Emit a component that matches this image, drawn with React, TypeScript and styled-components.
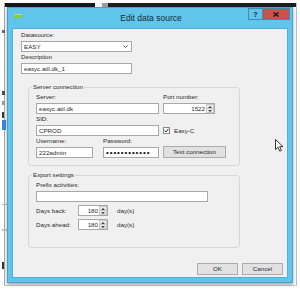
import styled, { createGlobalStyle } from 'styled-components';

const GlobalStyle = createGlobalStyle`
  * { box-sizing: border-box; }
  html, body { margin: 0; padding: 0; background: #ffffff; }
  body { font-family: 'Liberation Sans', Arial, sans-serif; color: #2a2a2a; }
`;

const Desktop = styled.div`
  position: relative;
  width: 300px;
  height: 292px;
  overflow: hidden;
  background: #ffffff;
`;

/* window lying behind the dialog */
const BackWindow = styled.div`
  position: absolute;
  left: 4px;
  top: 3px;
  width: 293px;
  height: 283px;
  display: flex;
  flex-direction: column;
  border-left: 1px solid #a9a9a9;
  border-right: 1px solid #bdbdbd;
  border-bottom: 1px solid #cfcfcf;
  background: #f8f8f8;
`;

const BackTopBar = styled.div`
  display: flex;
  height: 4px;
`;

const BarSegment = styled.div<{ $w?: number; $color: string }>`
  ${p => (p.$w ? `width: ${p.$w}px;` : 'flex: 1;')}
  background: ${p => p.$color};
`;

const LeftMarks = styled.div`
  position: absolute;
  left: 2px;
  top: 30px;
  width: 6px;
  display: flex;
  flex-direction: column;
  align-items: flex-start;
`;

const Mark = styled.div<{ $mt: number; $h: number; $w: number; $color: string }>`
  margin-top: ${p => p.$mt}px;
  height: ${p => p.$h}px;
  width: ${p => p.$w}px;
  background: ${p => p.$color};
`;

/* the dialog */
const Dialog = styled.div`
  position: absolute;
  left: 7px;
  top: 7px;
  width: 286px;
  height: 276px;
  display: flex;
  flex-direction: column;
  background: #60c4eb;
  border: 1px solid #44a3cf;
  padding: 0 4px 4px 4px;
  box-shadow: 0 2px 3px rgba(0, 0, 0, 0.3);
`;

const TitleBar = styled.div`
  height: 20px;
  display: grid;
  grid-template-columns: 1fr auto 1fr;
  align-items: center;
  margin-right: -2px;
`;

const AppIcon = styled.div`
  align-self: start;
  margin: 6px 0 0 2px;
  width: 8px;
  height: 4px;
  border-radius: 1px;
  background: #8cc63f;
  box-shadow: inset 0 1px 0 #b5e07a;
`;

const Title = styled.div`
  font-size: 8.5px;
  color: #1c2b33;
  white-space: nowrap;
`;

const CaptionButtons = styled.div`
  justify-self: end;
  align-self: start;
  display: flex;
`;

const CaptionButton = styled.div<{ $w: number; $bg: string }>`
  width: ${p => p.$w}px;
  height: 12px;
  background: ${p => p.$bg};
  border: 1px solid #3a8db3;
  display: flex;
  align-items: center;
  justify-content: center;
  font-size: 7px;
  font-weight: bold;
  color: #1b1b1b;
  & + & { border-left: none; }
`;

const Client = styled.div`
  flex: 1;
  display: flex;
  flex-direction: column;
  align-items: flex-start;
  background: #f0f0f0;
  border: 1px solid #4fb0da;
  padding: 2px 4px 2px 8px;
`;

const Label = styled.div<{ $mt?: number }>`
  font-size: 6.2px;
  line-height: 8px;
  height: 8px;
  margin-top: ${p => p.$mt ?? 0}px;
  margin-bottom: 2px;
  white-space: nowrap;
`;

const TextBox = styled.div<{ $w: number }>`
  position: relative;
  width: ${p => p.$w}px;
  height: 11px;
  border: 1px solid #a8a8a8;
  background: #ffffff;
  font-size: 6.2px;
  line-height: 9px;
  padding: 0 2px;
  white-space: nowrap;
  overflow: hidden;
`;

const Dots = styled.span`
  font-size: 8px;
  letter-spacing: 0.9px;
  line-height: 9px;
  color: #111;
`;

const Chevron = styled.svg`
  position: absolute;
  right: 3px;
  top: 3px;
`;

const GroupBox = styled.fieldset<{ $mt: number; $pb: number }>`
  margin: ${p => p.$mt}px 0 0 7px;
  width: 212px;
  min-width: 0;
  border: 1px solid #d7d7d7;
  border-radius: 3px;
  padding: 2px 0 ${p => p.$pb}px 7px;
`;

const GroupTitle = styled.legend`
  font-size: 6.2px;
  line-height: 8px;
  padding: 0 1px;
  margin-left: -4px;
`;

const Row = styled.div<{ $mt?: number }>`
  display: flex;
  align-items: flex-end;
  gap: 4px;
  margin-top: ${p => p.$mt ?? 0}px;
`;

const Field = styled.div<{ $w: number }>`
  width: ${p => p.$w}px;
  display: flex;
  flex-direction: column;
`;

const SplitField = styled.div`
  width: 123px;
  display: flex;
  justify-content: space-between;
`;

const SpinBox = styled.div<{ $w: number }>`
  width: ${p => p.$w}px;
  height: 11px;
  display: flex;
  border: 1px solid #a8a8a8;
  background: #ffffff;
`;

const SpinValue = styled.div`
  flex: 1;
  text-align: right;
  font-size: 6.2px;
  line-height: 9px;
  padding-right: 1px;
`;

const SpinButtons = styled.div`
  width: 8px;
  display: flex;
  flex-direction: column;
`;

const SpinArrow = styled.div`
  flex: 1;
  display: flex;
  align-items: center;
  justify-content: center;
  background: #ececec;
  border: 1px solid #c8c8c8;
  & + & { border-top: none; }
`;

const CheckLine = styled.div`
  height: 11px;
  display: flex;
  align-items: center;
  gap: 4px;
  font-size: 6.2px;
`;

const CheckBox = styled.div`
  width: 7px;
  height: 7px;
  border: 1px solid #8a8a8a;
  background: #ffffff;
  display: flex;
  align-items: center;
  justify-content: center;
`;

const Button = styled.div<{ $w: number }>`
  width: ${p => p.$w}px;
  height: 12px;
  border: 1px solid #acacac;
  background: #e1e1e1;
  font-size: 6.2px;
  line-height: 10px;
  text-align: center;
  white-space: nowrap;
`;

const DaysRow = styled.div`
  display: grid;
  grid-template-columns: 42px 30px auto;
  align-items: center;
  margin-top: 3px;
  font-size: 6.2px;
`;

const Unit = styled.span`
  margin-left: 9px;
`;

const ButtonBar = styled.div`
  margin-top: auto;
  align-self: stretch;
  display: flex;
  justify-content: flex-end;
  gap: 4px;
`;

const Cursor = styled.svg`
  position: absolute;
  left: 275px;
  top: 139px;
`;

function Spin({ w, value }: { w: number; value: string }) {
  return (
    <SpinBox $w={w}>
      <SpinValue>{value}</SpinValue>
      <SpinButtons>
        <SpinArrow>
          <svg width="4" height="2" viewBox="0 0 4 2"><path d="M0 2L2 0L4 2Z" fill="#444" /></svg>
        </SpinArrow>
        <SpinArrow>
          <svg width="4" height="2" viewBox="0 0 4 2"><path d="M0 0L2 2L4 0Z" fill="#444" /></svg>
        </SpinArrow>
      </SpinButtons>
    </SpinBox>
  );
}

export default function App() {
  return (
    <Desktop>
      <GlobalStyle />
      <BackWindow>
        <BackTopBar>
          <BarSegment $w={90} $color="#161616" />
          <BarSegment $w={7} $color="#f4f4f4" />
          <BarSegment $w={6} $color="#9a9a9a" />
          <BarSegment $color="#1d1d1d" />
        </BackTopBar>
      </BackWindow>
      <LeftMarks>
        <Mark $mt={0} $h={3} $w={3} $color="#6a6a6a" />
        <Mark $mt={58} $h={4} $w={3} $color="#4a4a4a" />
        <Mark $mt={6} $h={4} $w={3} $color="#9a9a9a" />
        <Mark $mt={7} $h={6} $w={2} $color="#3a3a3a" />
        <Mark $mt={2} $h={10} $w={4} $color="#3d85dc" />
        <Mark $mt={74} $h={1} $w={6} $color="#b5b5b5" />
        <Mark $mt={24} $h={2} $w={6} $color="#c2c2c2" />
        <Mark $mt={31} $h={7} $w={2} $color="#333333" />
      </LeftMarks>

      <Dialog>
        <TitleBar>
          <AppIcon />
          <Title>Edit data source</Title>
          <CaptionButtons>
            <CaptionButton $w={15} $bg="#60c4eb">?</CaptionButton>
            <CaptionButton $w={27} $bg="#c8524c">
              <svg width="6" height="5" viewBox="0 0 6 5">
                <path d="M0.5 0.5L5.5 4.5M5.5 0.5L0.5 4.5" stroke="#1b1b1b" strokeWidth="1.4" />
              </svg>
            </CaptionButton>
          </CaptionButtons>
        </TitleBar>

        <Client>
          <Label>Datasource:</Label>
          <TextBox $w={111}>
            EASY
            <Chevron width="5" height="3" viewBox="0 0 5 3">
              <path d="M0.5 0.5L2.5 2.5L4.5 0.5" stroke="#444" strokeWidth="0.9" fill="none" />
            </Chevron>
          </TextBox>
          <Label $mt={1}>Description</Label>
          <TextBox $w={111}>easyc.atil.dk_1</TextBox>

          <GroupBox $mt={9} $pb={7}>
            <GroupTitle>Server connection</GroupTitle>
            <Row>
              <Field $w={123}>
                <Label>Server:</Label>
                <TextBox $w={123}>easyc.atil.dk</TextBox>
              </Field>
              <Field $w={52}>
                <Label>Port number:</Label>
                <Spin w={52} value="1522" />
              </Field>
            </Row>
            <Row $mt={1}>
              <Field $w={123}>
                <Label>SID:</Label>
                <TextBox $w={123}>CPROD</TextBox>
              </Field>
              <CheckLine>
                <CheckBox>
                  <svg width="5" height="5" viewBox="0 0 5 5">
                    <path d="M0.5 2.6L1.9 4L4.5 0.8" stroke="#222" strokeWidth="1" fill="none" />
                  </svg>
                </CheckBox>
                Easy-C
              </CheckLine>
            </Row>
            <Row $mt={1}>
              <SplitField>
                <Field $w={57}>
                  <Label>Username:</Label>
                  <TextBox $w={57}>222admin</TextBox>
                </Field>
                <Field $w={56}>
                  <Label>Password:</Label>
                  <TextBox $w={56}>
                    <Dots>••••••••••••</Dots>
                  </TextBox>
                </Field>
              </SplitField>
              <Button $w={63}>Test connection</Button>
            </Row>
          </GroupBox>

          <GroupBox $mt={5} $pb={17}>
            <GroupTitle>Export settings</GroupTitle>
            <Label>Prefix activities:</Label>
            <TextBox $w={172} />
            <DaysRow>
              <span>Days back:</span>
              <Spin w={30} value="180" />
              <Unit>day(s)</Unit>
            </DaysRow>
            <DaysRow>
              <span>Days ahead:</span>
              <Spin w={30} value="180" />
              <Unit>day(s)</Unit>
            </DaysRow>
          </GroupBox>

          <ButtonBar>
            <Button $w={41}>OK</Button>
            <Button $w={41}>Cancel</Button>
          </ButtonBar>
        </Client>
      </Dialog>

      <Cursor width="9" height="13" viewBox="0 0 9 13">
        <path d="M0.5 0.5L0.5 10.5L3 8.2L4.8 12.2L6.4 11.5L4.7 7.6L8 7.6Z" fill="#ffffff" stroke="#222" strokeWidth="0.9" strokeLinejoin="round" />
      </Cursor>
    </Desktop>
  );
}
